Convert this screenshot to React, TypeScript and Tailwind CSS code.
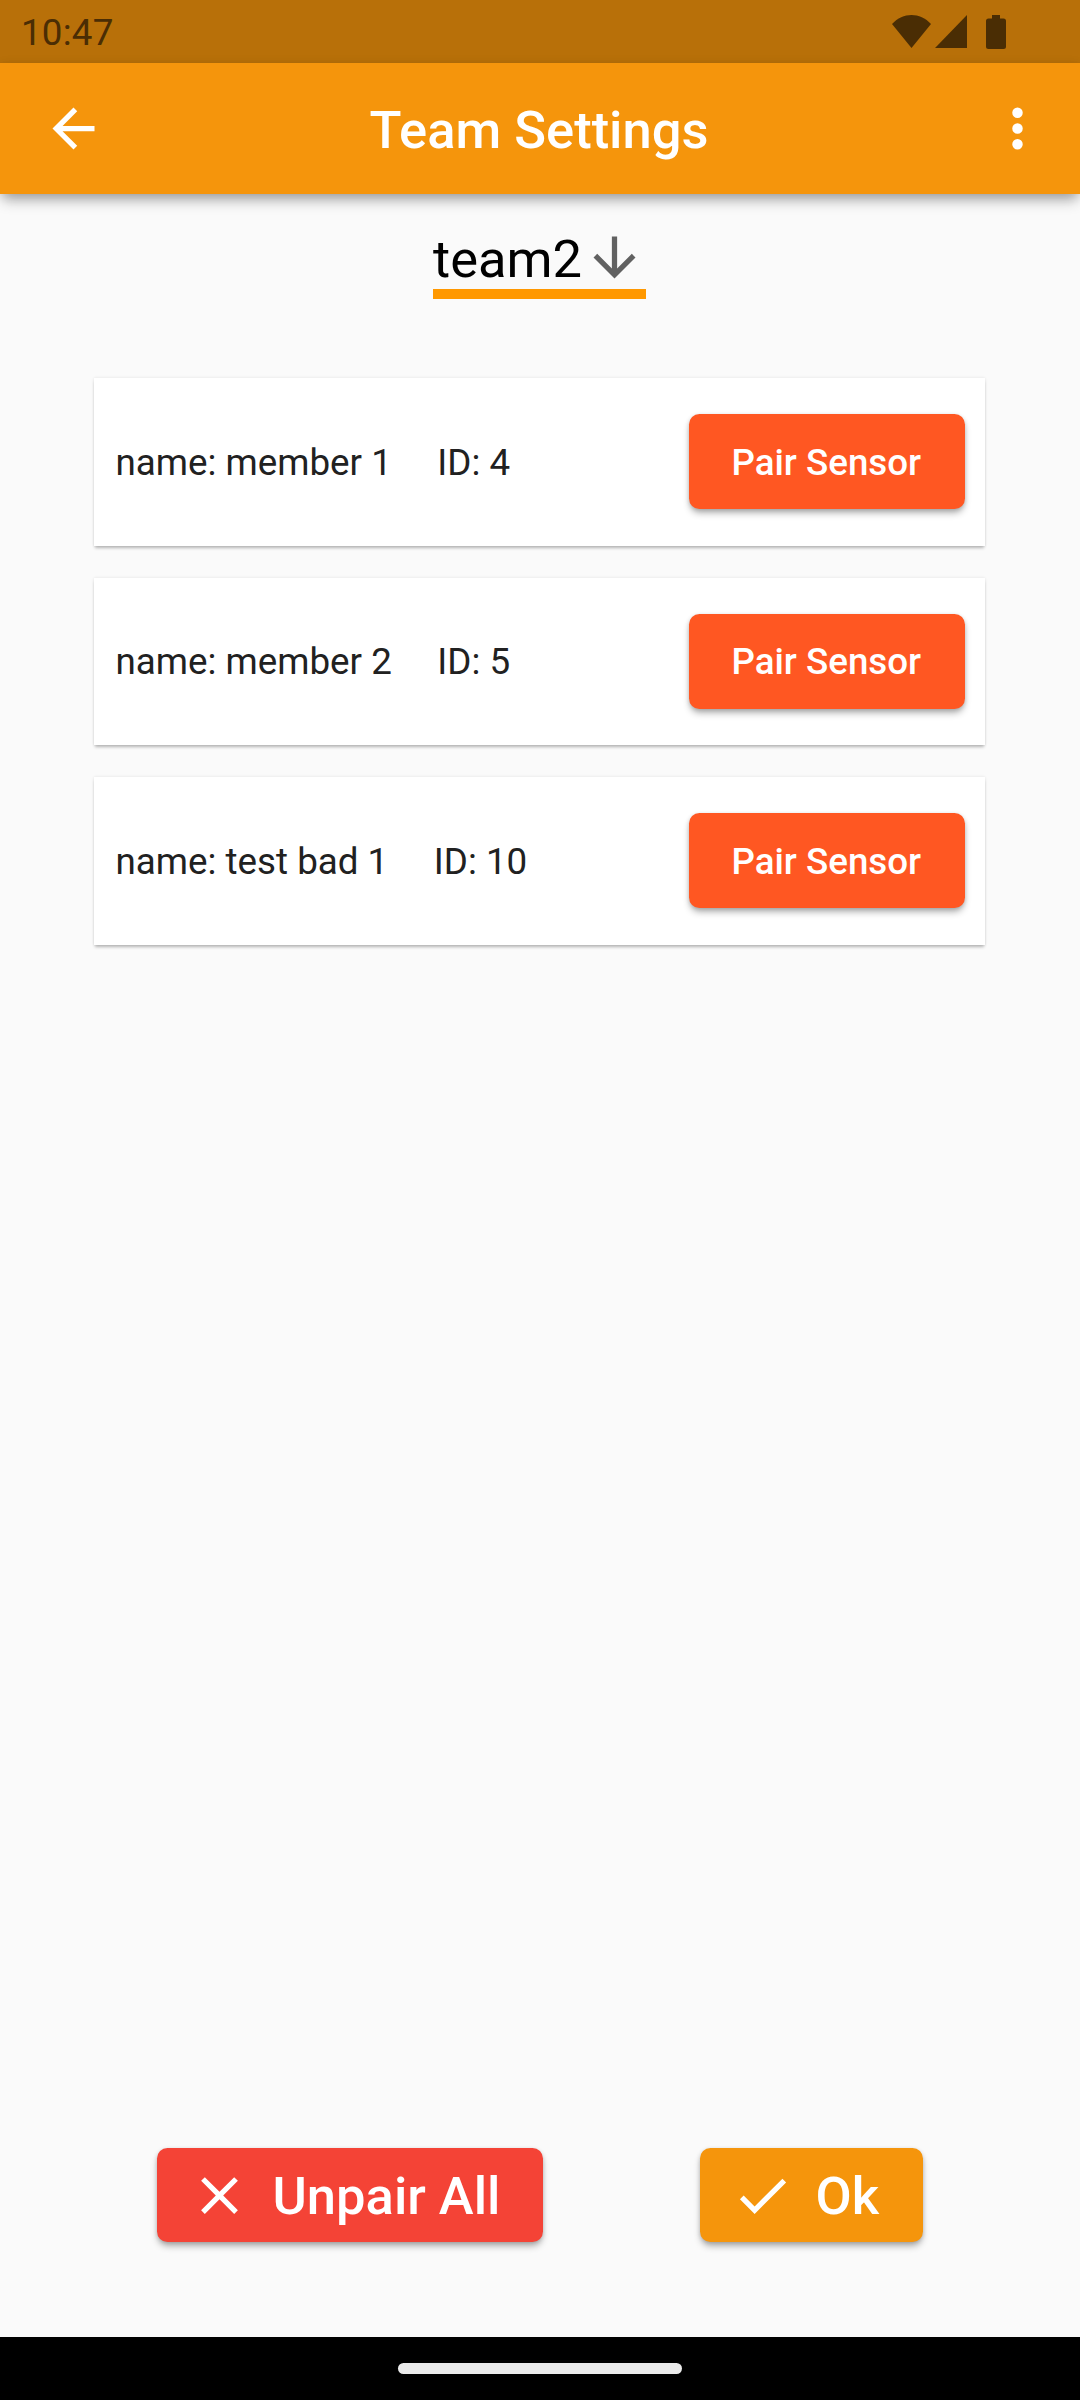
import React from "react";

const members = [
  { name: "member 1", id: 4 },
  { name: "member 2", id: 5 },
  { name: "test bad 1", id: 10 },
];

const iconPaths = {
  back: "M20 11H7.83l5.59-5.59L12 4l-8 8 8 8 1.41-1.41L7.83 13H20v-2z",
  more: "M12 8a2 2 0 1 0 0-4 2 2 0 0 0 0 4zm0 2a2 2 0 1 0 0 4 2 2 0 0 0 0-4zm0 6a2 2 0 1 0 0 4 2 2 0 0 0 0-4z",
  down: "M20 12l-1.41-1.41L13 16.17V4h-2v12.17l-5.58-5.59L4 12l8 8 8-8z",
  close: "M19 6.41L17.59 5 12 10.59 6.41 5 5 6.41 10.59 12 5 17.59 6.41 19 12 13.41 17.59 19 19 17.59 13.41 12z",
  check: "M9 16.17L4.83 12l-1.42 1.41L9 19 21 7l-1.41-1.41z",
};

function Icon({ name }: { name: keyof typeof iconPaths }) {
  return (
    <svg className="size-[63px] shrink-0" viewBox="0 0 24 24" fill="currentColor">
      <path d={iconPaths[name]} />
    </svg>
  );
}

function StatusBar() {
  return (
    <div className="flex h-[63px] items-center justify-between bg-[#b87009] pr-[74px] pl-[21px] text-[#4a2d04]">
      <span className="pt-[3px] text-[36.75px] leading-none tracking-[0.2px]">10:47</span>
      <div className="flex h-[34px] items-start">
        <svg className="h-[33px] w-[39px]" viewBox="0 0 39 33" fill="currentColor">
          <path d="M19.5 33 0 9C11-3 28-3 39 9Z" />
        </svg>
        <svg className="ml-[4px] h-[33px] w-[32px]" viewBox="0 0 32 33" fill="currentColor">
          <path d="M0 33 32 0V33Z" />
        </svg>
        <svg className="ml-[19px] h-[34px] w-[20px]" viewBox="0 0 20 34" fill="currentColor">
          <path d="M6 0H14V3.5H17.5Q20 3.5 20 6V31.5Q20 34 17.5 34H2.5Q0 34 0 31.5V6Q0 3.5 2.5 3.5H6Z" />
        </svg>
      </div>
    </div>
  );
}

function Header() {
  return (
    <header className="flex h-[131px] items-center justify-between bg-[#f5950c] pr-[31px] pl-[42px] text-white shadow-[0_9px_13px_-3px_rgba(0,0,0,0.3),0_2px_10px_rgba(0,0,0,0.12)]">
      <Icon name="back" />
      <h1 className="mr-[13px] pt-[3px] text-[52.5px] leading-none font-medium">Team Settings</h1>
      <Icon name="more" />
    </header>
  );
}

export default function App() {
  return (
    <div className="flex h-[2400px] w-[1080px] flex-col overflow-hidden bg-[#fafafa] font-['Roboto',sans-serif] text-[#212121]">
      <StatusBar />
      <Header />
      <main className="flex flex-1 flex-col items-center pt-[32px]">
        <div className="mr-[1px] flex h-[73px] w-[213px] items-center justify-between border-b-[10.5px] border-[#ff9800] text-black">
          <span className="pt-[3px] text-[52.5px] leading-none">team2</span>
          <span className="text-[#616161]">
            <Icon name="down" />
          </span>
        </div>
        <ul className="mt-[79px] mr-[1px] flex w-[891px] flex-col gap-[32px]">
          {members.map((m) => (
            <li
              key={m.id}
              className="flex h-[167.5px] items-center justify-between bg-white pr-[20.5px] pl-[21.5px] shadow-[0_3px_3px_-1px_rgba(0,0,0,0.26),0_0_3px_rgba(0,0,0,0.1)]"
            >
              <div className="flex gap-[45.5px] pt-[3px] text-[36.75px] leading-none">
                <span>name: {m.name}</span>
                <span>ID: {m.id}</span>
              </div>
              <button className="h-[95px] w-[275.5px] rounded-[10.5px] bg-[#ff5722] pt-[1px] pr-[1px] text-[36.75px] font-medium text-white shadow-[0_5px_7px_-1px_rgba(0,0,0,0.3),0_1px_4px_rgba(0,0,0,0.14)]">
                Pair Sensor
              </button>
            </li>
          ))}
        </ul>
        <div className="mt-auto mb-[95px] flex w-full justify-between px-[157px] text-[52.5px] leading-none font-medium text-white">
          <button className="flex h-[94px] w-[386px] items-center gap-[21.5px] rounded-[10.5px] bg-[#f44336] pl-[31px] shadow-[0_5px_7px_-1px_rgba(0,0,0,0.3),0_1px_4px_rgba(0,0,0,0.14)]">
            <Icon name="close" />
            <span className="pt-[3px] whitespace-nowrap">Unpair All</span>
          </button>
          <button className="flex h-[94px] w-[223px] items-center gap-[21.5px] rounded-[10.5px] bg-[#f5950c] pl-[31px] shadow-[0_5px_7px_-1px_rgba(0,0,0,0.3),0_1px_4px_rgba(0,0,0,0.14)]">
            <Icon name="check" />
            <span className="pt-[3px]">Ok</span>
          </button>
        </div>
      </main>
      <footer className="flex h-[63px] items-center justify-center bg-black">
        <div className="h-[10.5px] w-[284px] rounded-full bg-[#ebebeb]" />
      </footer>
    </div>
  );
}
